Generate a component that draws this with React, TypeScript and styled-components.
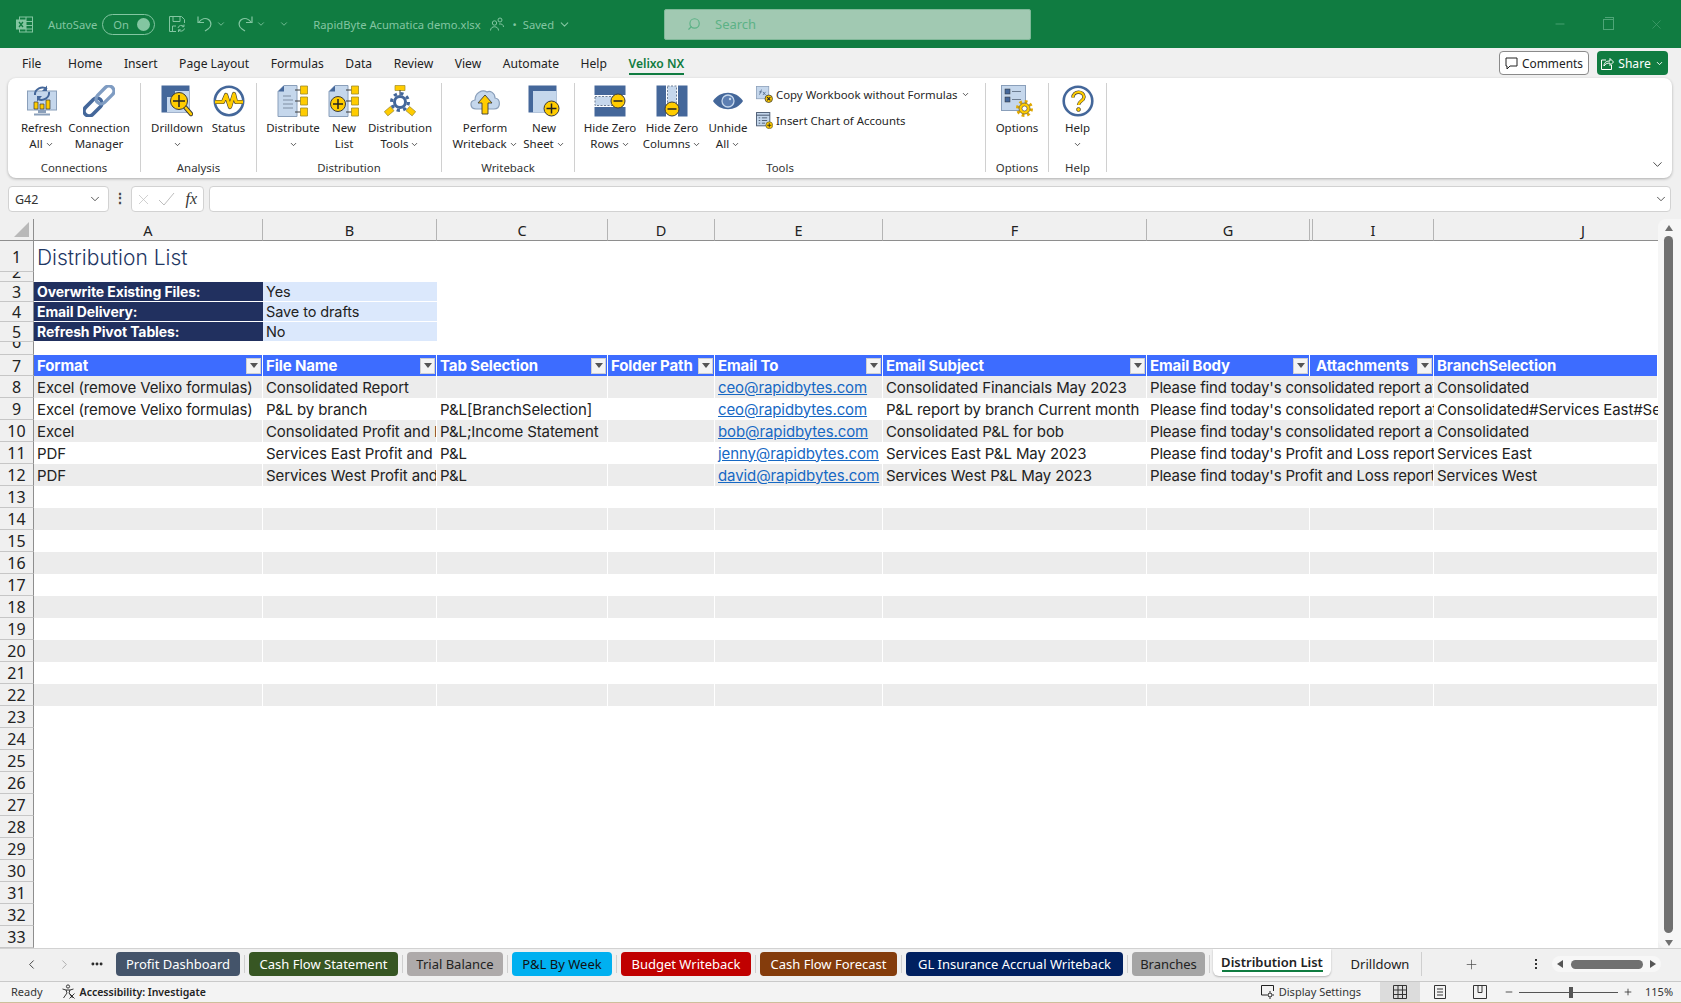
import React from 'react';
import styled, { createGlobalStyle } from 'styled-components';
import { ChevronDown, ChevronLeft, ChevronRight, Minus, MoreHorizontal, Plus, Search, X } from 'lucide-react';

const UI_FONT = '"Noto Sans", "Open Sans", sans-serif';
const SHEET_FONT = 'Inter, "Noto Sans", sans-serif';
const BLUE = '#44679a';
const PALE = '#c5d7ec';
const EDGE = '#8a9fba';
const YELLOW = '#ffcc00';
const INK = '#3a3a3a';
const COLUMNS = '34px 229px 174px 171px 107px 168px 264px 163px 3px 121px 224px';

const GlobalStyle = createGlobalStyle`
    html, body {
        margin: 0;
        padding: 0;
        background: #f0f0f0;
        font-family: ${UI_FONT};
    }
`;

/* ---------- ribbon icons ---------- */

const Ic = ({ children, size = 32 }: { children: React.ReactNode; size?: number }) => (
    <svg width={size} height={size} viewBox="0 0 32 32" fill="none">
        {children}
    </svg>
);

const YellowDisc = ({ x, y, r = 7, plus = true }: { x: number; y: number; r?: number; plus?: boolean }) => (
    <>
        <circle cx={x} cy={y} r={r} fill={YELLOW} stroke={INK} strokeWidth="1" />
        <path d={`M${x - r + 2.5} ${y}h${2 * r - 5}`} stroke="#222" strokeWidth="1.5" />
        {plus && <path d={`M${x} ${y - r + 2.5}v${2 * r - 5}`} stroke="#222" strokeWidth="1.5" />}
    </>
);

const RefreshIcon = () => (
    <Ic>
        <rect x="1.5" y="6" width="29" height="19" fill={PALE} stroke={EDGE} />
        <path d="M12 25h8v3h-8zM8 28.5h16v2H8z" fill={EDGE} />
        <path d="M8 17h4v7H8zM14 19h4v5h-4zM20 15h4v9h-4z" fill={YELLOW} stroke={INK} strokeWidth=".7" />
        <path d="M9 10a7.5 7 0 0 1 12-6M23 7a7.5 7 0 0 1-11 7" stroke={BLUE} strokeWidth="2" />
        <path d="M21 0.5v5.5h-5zM11 16.5v-5.5h5z" fill={BLUE} />
    </Ic>
);

const ChainIcon = () => (
    <Ic>
        <g transform="rotate(-45 16 16)">
            <rect x="-3" y="11" width="21" height="10" rx="5" stroke={BLUE} strokeWidth="3.6" />
            <rect x="14" y="11" width="21" height="10" rx="5" stroke="#7f9cc2" strokeWidth="3.4" />
        </g>
    </Ic>
);

const DrilldownIcon = () => (
    <Ic>
        <rect x="0.5" y="0.5" width="28" height="27" fill={BLUE} />
        <rect x="6" y="6" width="22" height="21" fill={PALE} />
        <rect x="6" y="6" width="8" height="6" fill={BLUE} />
        <path d="M24 22l6 7" stroke={INK} strokeWidth="4.4" strokeLinecap="round" />
        <path d="M24 22l6 7" stroke={YELLOW} strokeWidth="2.6" strokeLinecap="round" />
        <YellowDisc x={18} y={16} r={8.5} />
    </Ic>
);

const StatusIcon = () => (
    <Ic>
        <circle cx="16" cy="16" r="14.2" fill="#fff" stroke={BLUE} strokeWidth="2.6" />
        <path d="M2 17h8l3-7 4 12 4-13 2 8h7" stroke={INK} strokeWidth="4.2" strokeLinejoin="round" />
        <path d="M2 17h8l3-7 4 12 4-13 2 8h7" stroke={YELLOW} strokeWidth="3" strokeLinejoin="round" />
    </Ic>
);

const SideBoxes = () => (
    <>
        <path d="M18 5h6M18 16h6M18 27h6" stroke={INK} />
        <path d="M23.5 1h7v8h-7zM23.5 12h7v8h-7zM23.5 23h7v8h-7z" fill={YELLOW} stroke="#9c8a2a" strokeWidth=".8" />
    </>
);

const DocBase = () => (
    <>
        <path d="M1 6.5L7 .5h13v31H1z" fill={PALE} stroke={EDGE} />
        <path d="M1 6.5L7 .5v6z" fill={BLUE} />
    </>
);

const DistributeIcon = () => (
    <Ic>
        <DocBase />
        <path d="M6 11h8M6 15h10M6 19h10M6 23h10" stroke="#7f8ea3" />
        <SideBoxes />
    </Ic>
);

const NewListIcon = () => (
    <Ic>
        <DocBase />
        <SideBoxes />
        <YellowDisc x={10} y={19} r={7.5} />
    </Ic>
);

const DistToolsIcon = () => (
    <Ic>
        <path d="M11 .5h10v5H11z" fill={YELLOW} stroke="#9c8a2a" strokeWidth=".7" />
        <path d="M16 5v5" stroke={INK} />
        <path d="M8 23l-3 3M24 23l3 3" stroke={INK} />
        <circle cx="16" cy="17" r="8.5" stroke={BLUE} strokeWidth="3" strokeDasharray="3.3 3.37" />
        <circle cx="16" cy="17" r="5.5" fill="#fff" stroke={BLUE} strokeWidth="3" />
        <rect x="1" y="23.5" width="8" height="5.5" transform="rotate(-40 5 26)" fill={YELLOW} stroke="#9c8a2a" strokeWidth=".7" />
        <rect x="23" y="23.5" width="8" height="5.5" transform="rotate(40 27 26)" fill={YELLOW} stroke="#9c8a2a" strokeWidth=".7" />
    </Ic>
);

const CloudIcon = () => (
    <Ic>
        <path d="M7 24C1 24 0 16 6 15c0-7 7-11 12-8 3-2 8 1 8 6 6 1 6 11-1 11z" fill={PALE} stroke={EDGE} strokeWidth="1.2" />
        <path d="M16 10l7 8h-4v11h-6V18H9z" fill={YELLOW} stroke={INK} strokeWidth=".9" />
    </Ic>
);

const NewSheetIcon = () => (
    <Ic>
        <rect x="0.5" y="0.5" width="28" height="27" fill={BLUE} />
        <rect x="5" y="6" width="23.5" height="21.5" fill={PALE} />
        <YellowDisc x={23.5} y={23.5} r={7.5} />
    </Ic>
);

const HideRowsIcon = () => (
    <Ic>
        <rect x="0.5" y="0.5" width="31" height="9.5" fill={BLUE} />
        <rect x="0.5" y="22" width="31" height="9.5" fill={BLUE} />
        <rect x="1" y="11.5" width="22" height="9" fill={PALE} stroke="#6f7f95" strokeDasharray="2 1.5" />
        <YellowDisc x={24} y={16} r={7} plus={false} />
    </Ic>
);

const HideColumnsIcon = () => (
    <Ic>
        <rect x="0.5" y="0.5" width="9.5" height="31" fill={BLUE} />
        <rect x="22" y="0.5" width="9.5" height="31" fill={BLUE} />
        <rect x="11.5" y="1" width="9" height="22" fill={PALE} stroke="#6f7f95" strokeDasharray="2 1.5" />
        <YellowDisc x={16} y={24} r={7} plus={false} />
    </Ic>
);

const EyeIcon = () => (
    <Ic>
        <path d="M1 16C8 5 24 5 31 16 24 27 8 27 1 16z" fill={BLUE} />
        <circle cx="16" cy="16" r="6" fill="#5d7fb2" stroke={PALE} strokeWidth="1.3" />
        <circle cx="18" cy="14" r="1.2" fill={PALE} />
    </Ic>
);

const CopyWorkbookIcon = () => (
    <Ic size={17}>
        <rect x="1" y="1" width="23" height="23" fill={PALE} stroke={EDGE} strokeWidth="1.5" />
        <path d="M6 16c3 0 2-9 5-9M6 11h5M13 11l5 6M18 11l-5 6" stroke="#4d6689" strokeWidth="1.5" />
        <circle cx="24" cy="24" r="7" fill={YELLOW} stroke={INK} strokeWidth="1.5" />
        <path d="M21 21l6 6M27 21l-6 6" stroke="#222" strokeWidth="2" />
    </Ic>
);

const ChartAccountsIcon = () => (
    <Ic size={17}>
        <rect x="1" y="1" width="25" height="25" fill={PALE} stroke="#4f5f75" strokeWidth="1.8" />
        <path d="M1 6h25" stroke="#4f5f75" strokeWidth="2" />
        <path d="M5 11h3M11 11h10M5 16h3M11 16h10M5 21h3M11 21h6" stroke="#4f5f75" strokeWidth="1.8" />
        <circle cx="25" cy="25" r="6.5" fill={YELLOW} stroke={INK} strokeWidth="1" />
        <path d="M21 25h8M25 21v8" stroke="#222" strokeWidth="1.5" />
    </Ic>
);

const OptionsIcon = () => (
    <Ic>
        <rect x="0.5" y="0.5" width="24" height="25" fill={PALE} stroke={EDGE} />
        <rect x="4" y="4" width="5" height="5" fill={BLUE} stroke="#333" strokeWidth=".5" />
        <rect x="4" y="12" width="5" height="5" fill={BLUE} stroke="#333" strokeWidth=".5" />
        <path d="M11 6.5h9M11 14.5h9" stroke="#6d7d92" />
        <circle cx="23.5" cy="23.5" r="7" stroke="#e0a800" strokeWidth="3" strokeDasharray="2.75 2.75" />
        <circle cx="23.5" cy="23.5" r="5.5" fill={YELLOW} stroke={INK} strokeWidth=".6" />
        <circle cx="23.5" cy="23.5" r="2.5" fill="#fff" stroke={INK} strokeWidth=".6" />
    </Ic>
);

const HelpIcon = () => (
    <Ic>
        <circle cx="16" cy="16" r="14.3" fill="#fff" stroke={BLUE} strokeWidth="2.6" />
        <path d="M11 12.5c0-7 11-7 11-.5 0 4-5.5 4-5.5 8" stroke={INK} strokeWidth="3.4" />
        <path d="M11 12.5c0-7 11-7 11-.5 0 4-5.5 4-5.5 8" stroke={YELLOW} strokeWidth="2.2" />
        <circle cx="16.5" cy="24.5" r="2" fill={YELLOW} stroke={INK} strokeWidth=".7" />
    </Ic>
);

const SaveIcon = () => (
    <svg width="18" height="18" viewBox="0 0 18 18" fill="none" stroke="currentColor">
        <path d="M8 16.5H1.5v-15h12l3 3V8" />
        <path d="M5 1.5v5h7v-5M4.5 16v-5H8" />
        <path d="M10 13a3.5 3.5 0 0 1 6-1.5M16.5 13.5a3.5 3.5 0 0 1-6 1.5M16 9.5v2.2h-2.2M10.5 17v-2.2h2.2" />
    </svg>
);

const UndoIcon = ({ flip }: { flip?: boolean }) => (
    <svg width="16" height="18" viewBox="0 0 16 18" fill="none" stroke="currentColor" strokeWidth="1.2" style={flip ? { transform: 'scaleX(-1)' } : undefined}>
        <path d="M1 1.5v6h6" />
        <path d="M1.5 7.5c3-4 7-5 10-3 3.5 2.5 3 7.5-.5 9.5l-3 2" />
    </svg>
);

const ExcelLogo = () => (
    <svg width="17" height="17" viewBox="0 0 17 17" fill="none" stroke="currentColor">
        <rect x="3.5" y="1" width="13" height="15" />
        <path d="M10 1v15M10 5.5h6.5M10 9.5h6.5M10 13h6.5" />
        <rect x=".5" y="4" width="9" height="9" fill="currentColor" />
        <path d="M3 6l4 5M7 6l-4 5" stroke="#107c41" strokeWidth="1.3" />
    </svg>
);

const PersonIcon = () => (
    <svg width="14" height="14" viewBox="0 0 14 14" fill="none" stroke="currentColor">
        <circle cx="4.5" cy="6" r="2.2" />
        <path d="M.5 13.5c0-5 8-5 8 0" />
        <circle cx="10" cy="3" r="2" />
        <path d="M9 7c3-.5 4.5 1 4.5 3" />
    </svg>
);

const CommentIcon = () => (
    <svg width="13" height="13" viewBox="0 0 13 13" fill="none" stroke="#222">
        <path d="M1 1h11v8H5l-3 3V9H1z" />
    </svg>
);

const ShareIcon = () => (
    <svg width="13" height="13" viewBox="0 0 13 13" fill="none" stroke="currentColor">
        <path d="M5 3H.5v9.5h10V8" />
        <path d="M3 9c0-4 3-5 6-5V1.5l3.5 3.5L9 8.5V6c-3 0-5 1-6 3z" />
    </svg>
);

const AccessibilityIcon = () => (
    <svg width="15" height="15" viewBox="0 0 15 15" fill="none" stroke="#222" strokeWidth=".9">
        <circle cx="7" cy="2.5" r="1.6" />
        <path d="M1.5 5L5 6l1 3-3.5 5M12.5 5L9 6 8 9l3.5 5M5 6h4M8.5 9.5l5 5M13.5 9.5l-5 5" />
    </svg>
);

const DisplayIcon = () => (
    <svg width="14" height="14" viewBox="0 0 14 14" fill="none" stroke="#222">
        <path d="M5 10H.5V.5h12V6" />
        <circle cx="9" cy="10" r="2" />
        <path d="M9 6v1.5M9 12.5V14M5 10h1.5M11.5 10H13" />
    </svg>
);

const NormalViewIcon = () => (
    <svg width="14" height="14" viewBox="0 0 14 14" fill="none" stroke="#333">
        <path d="M.5.5h13v13H.5zM.5 5h13M.5 9.5h13M5 .5v13M9.5 .5v13" />
    </svg>
);

const PageViewIcon = () => (
    <svg width="14" height="14" viewBox="0 0 14 14" fill="none" stroke="#333">
        <path d="M1.5.5h11v13h-11zM4 4h6M4 7h6M4 10h6" />
    </svg>
);

const BreakViewIcon = () => (
    <svg width="14" height="14" viewBox="0 0 14 14" fill="none" stroke="#333">
        <path d="M.5.5h13v13H.5zM5 .5v7h4v-7" />
    </svg>
);

const FilterTriangle = styled.span`
    width: 0;
    height: 0;
    border-left: 4px solid transparent;
    border-right: 4px solid transparent;
    border-top: 5px solid #555;
`;

/* ---------- page ---------- */

const Page = styled.div`
    width: 1681px;
    height: 1003px;
    overflow: hidden;
    display: flex;
    flex-direction: column;
    background: #f0f0f0;
    color: #222;
`;

const TitleBar = styled.header`
    height: 48px;
    flex: none;
    display: flex;
    align-items: center;
    background: #107c41;
    color: #83c6a1;
    font-size: 11.2px;
`;

const TitleLeft = styled.div`
    width: 664px;
    flex: none;
    display: flex;
    align-items: center;
`;

const TitleSlot = styled.div<{ $left: number }>`
    margin-left: ${(p) => p.$left}px;
    display: flex;
    align-items: center;
    white-space: nowrap;
`;

const Toggle = styled.div`
    width: 53px;
    height: 21px;
    box-sizing: border-box;
    border: 1px solid #83c6a1;
    border-radius: 11px;
    display: flex;
    align-items: center;
    justify-content: space-between;
    padding: 0 4px 0 10px;
`;

const ToggleKnob = styled.span`
    width: 13px;
    height: 13px;
    border-radius: 50%;
    background: #83c6a1;
`;

const SearchBox = styled.div`
    width: 367px;
    height: 31px;
    flex: none;
    box-sizing: border-box;
    padding-left: 22px;
    border: 1px solid #7fb898;
    border-radius: 2px;
    background: #a1c9b2;
    color: #5cb286;
    display: flex;
    align-items: center;
    gap: 14px;
    font-size: 13px;
`;

const WindowButtons = styled.div`
    margin-left: auto;
    width: 111px;
    padding-right: 17px;
    display: flex;
    justify-content: space-between;
    align-items: center;
    color: #4ea577;
`;

const RestoreGlyph = styled.span`
    position: relative;
    width: 9px;
    height: 9px;
    border: 1px solid #4ea577;
    &::after {
        content: '';
        position: absolute;
        left: 1px;
        top: -3px;
        width: 8px;
        height: 8px;
        border-top: 1px solid #4ea577;
        border-right: 1px solid #4ea577;
    }
`;

const MenuRow = styled.nav`
    height: 30px;
    flex: none;
    display: flex;
    align-items: center;
    padding: 0 13px 0 22px;
    gap: 21.6px;
    font-size: 12.1px;
`;

const MenuTab = styled.span<{ $active?: boolean; $gapAfter?: number }>`
    position: relative;
    margin-right: ${(p) => p.$gapAfter ?? 0}px;
    color: ${(p) => (p.$active ? '#107c41' : '#222')};
    font-weight: ${(p) => (p.$active ? 600 : 400)};
    &::after {
        content: '';
        display: ${(p) => (p.$active ? 'block' : 'none')};
        position: absolute;
        left: 0;
        right: 0;
        bottom: -3px;
        height: 2px;
        background: #107c41;
    }
`;

const MenuActions = styled.div`
    margin-left: auto;
    display: flex;
    gap: 8px;
`;

const CommentsButton = styled.div`
    width: 90px;
    height: 24px;
    box-sizing: border-box;
    border: 1px solid #8a8a8a;
    border-radius: 4px;
    background: #fff;
    display: flex;
    align-items: center;
    justify-content: center;
    gap: 4px;
    font-size: 11.9px;
`;

const ShareButton = styled.div`
    width: 71px;
    height: 24px;
    border-radius: 4px;
    background: #107c41;
    color: #fff;
    display: flex;
    align-items: center;
    justify-content: center;
    gap: 4px;
`;

const Ribbon = styled.section`
    position: relative;
    flex: none;
    height: 100px;
    margin: 0 9px 0 8px;
    box-sizing: border-box;
    padding-top: 5px;
    display: flex;
    align-items: flex-start;
    background: #fff;
    border-radius: 8px;
    box-shadow: 0 1px 3px rgba(0, 0, 0, 0.28);
`;

const Group = styled.div<{ $w: number }>`
    width: ${(p) => p.$w}px;
    height: 89px;
    box-sizing: border-box;
    flex: none;
    display: flex;
    flex-direction: column;
    border-right: 1px solid #d0d0d0;
`;

const GroupBody = styled.div<{ $pad: number }>`
    flex: 1;
    display: flex;
    padding-left: ${(p) => p.$pad}px;
`;

const GroupLabel = styled.div`
    height: 14px;
    line-height: 20px;
    text-align: center;
    font-size: 11.4px;
    color: #333;
`;

const RibbonItem = styled.div<{ $w: number }>`
    width: ${(p) => p.$w}px;
    flex: none;
    display: flex;
    flex-direction: column;
    align-items: center;
    padding-top: 2px;
    font-size: 11.5px;
    line-height: 16px;
    color: #262626;
    white-space: nowrap;
`;

const ItemIcon = styled.div`
    height: 32px;
    margin-bottom: 3px;
`;

const ItemLine = styled.div`
    height: 16px;
    display: flex;
    align-items: center;
    gap: 2px;
`;

const SmallColumn = styled.div`
    margin-left: 3px;
    padding-top: 3px;
    display: flex;
    flex-direction: column;
    gap: 9px;
    font-size: 11.4px;
    color: #262626;
`;

const SmallItem = styled.div`
    height: 17px;
    display: flex;
    align-items: center;
    gap: 3px;
    white-space: nowrap;
`;

const CollapseRibbon = styled.span`
    position: absolute;
    right: 7px;
    bottom: 6px;
    display: flex;
    color: #333;
`;

const FormulaBar = styled.div`
    flex: none;
    height: 26px;
    margin-top: 8px;
    padding: 0 10px 0 8px;
    display: flex;
    align-items: stretch;
`;

const FieldBox = styled.div<{ $w?: number; $gap?: number; $endPad?: number }>`
    ${(p) => (p.$w ? `width: ${p.$w}px; flex: none;` : 'flex: 1;')}
    margin-left: ${(p) => p.$gap ?? 0}px;
    box-sizing: border-box;
    border: 1px solid #d2d2d2;
    border-radius: 4px;
    background: #fff;
    display: flex;
    align-items: center;
    justify-content: space-between;
    padding: 0 ${(p) => p.$endPad ?? 6}px 0 6px;
    font-size: 12.5px;
    color: #333;
`;

const BarDivider = styled.span`
    width: 22px;
    flex: none;
    text-align: center;
    line-height: 24px;
    font-weight: 700;
    font-size: 14px;
    color: #444;
`;

const Fx = styled.span`
    font-family: 'Liberation Serif', serif;
    font-style: italic;
    font-size: 16px;
    color: #333;
`;

const FxMarks = styled.div`
    margin-left: -3px;
    display: flex;
    align-items: center;
    gap: 6px;
    color: #bdbdbd;
`;

const SheetArea = styled.main`
    flex: none;
    height: 729px;
    margin-top: 7px;
    display: flex;
`;

const Sheet = styled.div`
    width: 1658px;
    flex: none;
    overflow: hidden;
    display: flex;
    flex-direction: column;
    background: #fff;
`;

const SheetRow = styled.div<{ $h: number }>`
    height: ${(p) => p.$h}px;
    flex: none;
    display: grid;
    grid-template-columns: ${COLUMNS};
`;

const ColumnHead = styled.div<{ $shift?: number }>`
    box-sizing: border-box;
    display: flex;
    align-items: center;
    justify-content: center;
    padding: 1px 0 0 ${(p) => p.$shift ?? 0}px;
    background: #f0f0f0;
    border-right: 1px solid #b4b4b4;
    border-bottom: 1px solid #8e8e8e;
    font-size: 14.5px;
    color: #222;
    &:last-child {
        border-right: 0;
    }
`;

const Corner = styled(ColumnHead)`
    position: relative;
    border-right: 1px solid #8e8e8e;
    &::after {
        content: '';
        position: absolute;
        right: 4px;
        bottom: 3px;
        border-left: 15px solid transparent;
        border-bottom: 15px solid #b9b9b9;
    }
`;

const RowNumber = styled.div<{ $clipped?: boolean }>`
    box-sizing: border-box;
    overflow: hidden;
    display: flex;
    align-items: ${(p) => (p.$clipped ? 'flex-start' : 'center')};
    justify-content: center;
    padding-top: ${(p) => (p.$clipped ? 0 : 1)}px;
    line-height: ${(p) => (p.$clipped ? 0 : '20px')};
    background: #f0f0f0;
    border-right: 1px solid #8e8e8e;
    border-bottom: 1px solid #c6c6c6;
    font-size: 16px;
    color: #222;
`;

const Cell = styled.div<{ $tone?: 'band' | 'head' | 'label' | 'value'; $span?: number }>`
    box-sizing: border-box;
    overflow: hidden;
    white-space: nowrap;
    display: flex;
    align-items: center;
    justify-content: space-between;
    padding: 0 1px 0 3px;
    font-family: ${SHEET_FONT};
    font-size: 15px;
    letter-spacing: ${(p) => (p.$span ? '-0.18px' : '-0.1px')};
    ${(p) => p.$span && `grid-column: span ${p.$span};`}
    ${(p) => p.$tone === 'band' && 'background: #ececec; border-right: 1px solid #fff;'}
    ${(p) => p.$tone === 'head' && 'background: #3d6cff; color: #fff; font-weight: 700; border-right: 1px solid #fff;'}
    ${(p) => p.$tone === 'label' && 'background: #21305f; color: #fff; font-weight: 700; font-size: 14px; border-bottom: 1px solid #fff;'}
    ${(p) => p.$tone === 'value' && 'background: #dbe8fc; font-size: 14.5px; border-bottom: 1px solid #fff;'}
`;

const SheetTitle = styled.div`
    grid-column: span 2;
    padding: 1px 0 0 3px;
    display: flex;
    align-items: center;
    font-family: ${SHEET_FONT};
    font-size: 21px;
    font-weight: 300;
    color: #1f3864;
`;

const FilterButton = styled.span`
    width: 15px;
    height: 16px;
    flex: none;
    background: #f4f4f4;
    border: 1px solid #d0d0d0;
    box-sizing: border-box;
    display: flex;
    align-items: center;
    justify-content: center;
`;

const MailLink = styled.a`
    color: #1668c4;
    text-decoration: underline;
`;

const VScroll = styled.div`
    width: 23px;
    flex: none;
    display: flex;
    flex-direction: column;
    align-items: center;
    background: #f6f6f6;
    border-radius: 8px 0 0 8px;
    padding: 6px 2px 2px 0;
    box-sizing: border-box;
`;

const ScrollArrow = styled.span<{ $up?: boolean }>`
    flex: none;
    width: 0;
    height: 0;
    border-left: 4.5px solid transparent;
    border-right: 4.5px solid transparent;
    ${(p) => (p.$up ? 'border-bottom: 6px solid #707070;' : 'border-top: 6px solid #707070;')}
`;

const VThumb = styled.div`
    flex: 1;
    width: 9px;
    margin: 5px 0 7px;
    border-radius: 5px;
    background: #707070;
`;

const TabBar = styled.div`
    flex: none;
    height: 33px;
    box-sizing: border-box;
    border-top: 1px solid #d2d2d2;
    display: flex;
    align-items: flex-start;
    font-size: 13px;
`;

const TabNav = styled.div`
    width: 116px;
    height: 30px;
    flex: none;
    box-sizing: border-box;
    padding: 0 12px 0 24px;
    display: flex;
    align-items: center;
    justify-content: space-between;
`;

const Tabs = styled.div`
    display: flex;
    gap: 9px;
    padding-top: 3px;
`;

const Tab = styled.div<{ $w: number; $bg: string; $fg?: string }>`
    position: relative;
    width: ${(p) => p.$w}px;
    height: 24px;
    display: flex;
    align-items: center;
    justify-content: center;
    border-radius: 4px;
    background: ${(p) => p.$bg};
    color: ${(p) => p.$fg ?? '#fff'};
    white-space: nowrap;
    &::after {
        content: '';
        position: absolute;
        right: -5px;
        top: 3px;
        bottom: 3px;
        width: 1px;
        background: #cfcfcf;
    }
`;

const ActiveTab = styled.div`
    position: relative;
    width: 118px;
    height: 27px;
    margin: 0 0 0 8px;
    flex: none;
    box-sizing: border-box;
    background: #fff;
    border-radius: 0 0 6px 6px;
    box-shadow: 0 1px 2px rgba(0, 0, 0, 0.25);
    text-align: center;
    line-height: 26px;
    font-weight: 600;
    white-space: nowrap;
    &::after {
        content: '';
        position: absolute;
        left: 9px;
        right: 8px;
        bottom: 4px;
        height: 2px;
        background: #107c41;
    }
`;

const PlainTab = styled.div`
    width: 91px;
    height: 24px;
    margin-top: 3px;
    flex: none;
    box-sizing: border-box;
    padding-left: 8px;
    text-align: center;
    line-height: 24px;
    border-right: 1px solid #cfcfcf;
`;

const TabTools = styled.div`
    flex: 1;
    height: 30px;
    display: flex;
    align-items: center;
    padding-right: 20px;
`;

const AddSheet = styled.span`
    margin-left: 42px;
    display: flex;
    color: #444;
`;

const TabDots = styled.span`
    margin-left: 56px;
    display: flex;
    flex-direction: column;
    gap: 2px;
    & > i {
        width: 2px;
        height: 2px;
        background: #333;
    }
`;

const HScroll = styled.div`
    margin-left: auto;
    width: 109px;
    height: 16px;
    box-sizing: border-box;
    padding: 0 5px;
    display: flex;
    align-items: center;
    justify-content: space-between;
    border-radius: 8px;
    background: #f7f7f7;
`;

const SideArrow = styled.span<{ $left?: boolean }>`
    width: 0;
    height: 0;
    border-top: 4.5px solid transparent;
    border-bottom: 4.5px solid transparent;
    ${(p) => (p.$left ? 'border-right: 6px solid #555;' : 'border-left: 6px solid #555;')}
`;

const HThumb = styled.span`
    width: 72px;
    height: 9px;
    border-radius: 5px;
    background: #707070;
`;

const StatusBar = styled.footer`
    flex: none;
    height: 22px;
    box-sizing: border-box;
    border-top: 1px solid #c9c9c9;
    border-bottom: 1px solid #cdbf9b;
    background: #f3f3f3;
    display: flex;
    align-items: stretch;
    font-size: 11px;
    line-height: 16px;
    color: #333;
`;

const StatusText = styled.span<{ $left: number; $strong?: boolean }>`
    margin-left: ${(p) => p.$left}px;
    display: flex;
    align-items: center;
    gap: 4px;
    padding-bottom: 1px;
    font-weight: ${(p) => (p.$strong ? 600 : 400)};
    font-size: ${(p) => (p.$strong ? '10.5px' : '11px')};
    color: ${(p) => (p.$strong ? '#222' : '#333')};
    white-space: nowrap;
`;

const StatusRight = styled.div`
    margin-left: auto;
    display: flex;
    align-items: stretch;
`;

const ViewButton = styled.span<{ $on?: boolean; $w: number; $gap?: number }>`
    width: ${(p) => p.$w}px;
    margin-left: ${(p) => p.$gap ?? 0}px;
    display: flex;
    align-items: center;
    justify-content: center;
    background: ${(p) => (p.$on ? '#dcdcdc' : 'transparent')};
`;

const ZoomRail = styled.div`
    position: relative;
    width: 99px;
    margin: 0 5px;
    align-self: center;
    height: 1px;
    background: #555;
`;

const ZoomKnob = styled.span`
    position: absolute;
    left: 50px;
    top: -5px;
    width: 4px;
    height: 11px;
    background: #555;
`;

const ZoomSide = styled.div`
    margin-left: 4px;
    display: flex;
    align-items: center;
`;

const ZoomValue = styled.span`
    width: 48px;
    padding-left: 12px;
    box-sizing: border-box;
    display: flex;
    align-items: center;
`;

/* ---------- data ---------- */

const menu = ['Home', 'Insert', 'Page Layout', 'Formulas', 'Data', 'Review', 'View', 'Automate', 'Help'];

type Item = { w: number; icon: React.ReactNode; lines: string[]; caret?: boolean };
type RibbonGroup = { label: string; w: number; pad: number; items: Item[]; small?: boolean };

const ribbonGroups: RibbonGroup[] = [
    {
        label: 'Connections',
        w: 133,
        pad: 10,
        items: [
            { w: 47, icon: <RefreshIcon />, lines: ['Refresh', 'All'], caret: true },
            { w: 68, icon: <ChainIcon />, lines: ['Connection', 'Manager'] },
        ],
    },
    {
        label: 'Analysis',
        w: 116,
        pad: 6,
        items: [
            { w: 60, icon: <DrilldownIcon />, lines: ['Drilldown', ''], caret: true },
            { w: 43, icon: <StatusIcon />, lines: ['Status'] },
        ],
    },
    {
        label: 'Distribution',
        w: 185,
        pad: 7,
        items: [
            { w: 58, icon: <DistributeIcon />, lines: ['Distribute', ''], caret: true },
            { w: 44, icon: <NewListIcon />, lines: ['New', 'List'] },
            { w: 68, icon: <DistToolsIcon />, lines: ['Distribution', 'Tools'], caret: true },
        ],
    },
    {
        label: 'Writeback',
        w: 133,
        pad: 8,
        items: [
            { w: 70, icon: <CloudIcon />, lines: ['Perform', 'Writeback'], caret: true },
            { w: 48, icon: <NewSheetIcon />, lines: ['New', 'Sheet'], caret: true },
        ],
    },
    {
        label: 'Tools',
        w: 411,
        pad: 4,
        small: true,
        items: [
            { w: 62, icon: <HideRowsIcon />, lines: ['Hide Zero', 'Rows'], caret: true },
            { w: 62, icon: <HideColumnsIcon />, lines: ['Hide Zero', 'Columns'], caret: true },
            { w: 50, icon: <EyeIcon />, lines: ['Unhide', 'All'], caret: true },
        ],
    },
    {
        label: 'Options',
        w: 63,
        pad: 0,
        items: [{ w: 62, icon: <OptionsIcon />, lines: ['Options'] }],
    },
    {
        label: 'Help',
        w: 58,
        pad: 0,
        items: [{ w: 57, icon: <HelpIcon />, lines: ['Help', ''], caret: true }],
    },
];

const columnLetters = ['A', 'B', 'C', 'D', 'E', 'F', 'G', '', 'I', 'J'];

const settings = [
    { row: 3, label: 'Overwrite Existing Files:', value: 'Yes' },
    { row: 4, label: 'Email Delivery:', value: 'Save to drafts' },
    { row: 5, label: 'Refresh Pivot Tables:', value: 'No' },
];

const headers = ['Format', 'File Name', 'Tab Selection', 'Folder Path', 'Email To', 'Email Subject', 'Email Body', '', 'Attachments', 'BranchSelection'];

const records = [
    ['Excel (remove Velixo formulas)', 'Consolidated Report', '', '', 'ceo@rapidbytes.com', 'Consolidated Financials May 2023', "Please find today's consolidated report attached", 'Consolidated'],
    ['Excel (remove Velixo formulas)', 'P&L by branch', 'P&L[BranchSelection]', '', 'ceo@rapidbytes.com', 'P&L report by branch Current month', "Please find today's consolidated report attached", 'Consolidated#Services East#Services West'],
    ['Excel', 'Consolidated Profit and Loss', 'P&L;Income Statement', '', 'bob@rapidbytes.com', 'Consolidated P&L for bob', "Please find today's consolidated report attached", 'Consolidated'],
    ['PDF', 'Services East Profit and Loss', 'P&L', '', 'jenny@rapidbytes.com', 'Services East P&L May 2023', "Please find today's Profit and Loss report attached", 'Services East'],
    ['PDF', 'Services West Profit and Loss', 'P&L', '', 'david@rapidbytes.com', 'Services West P&L May 2023', "Please find today's Profit and Loss report attached", 'Services West'],
];

const sheetTabs = [
    { name: 'Profit Dashboard', w: 124, bg: '#44546a' },
    { name: 'Cash Flow Statement', w: 149, bg: '#375623' },
    { name: 'Trial Balance', w: 96, bg: '#aeaaaa', fg: '#222' },
    { name: 'P&L By Week', w: 100, bg: '#00b0f0', fg: '#111' },
    { name: 'Budget Writeback', w: 130, bg: '#c00000' },
    { name: 'Cash Flow Forecast', w: 137, bg: '#843c0c' },
    { name: 'GL Insurance Accrual Writeback', w: 217, bg: '#002060' },
    { name: 'Branches', w: 73, bg: '#a5a5a5', fg: '#222' },
];

const Caret = () => <ChevronDown size={9} strokeWidth={2} />;

function RibbonGroupView({ group }: { group: RibbonGroup }) {
    return (
        <Group $w={group.w}>
            <GroupBody $pad={group.pad}>
                {group.items.map((item) => {
                    const lines = item.lines;
                    return (
                        <RibbonItem key={lines.join('-')} $w={item.w}>
                            <ItemIcon>{item.icon}</ItemIcon>
                            {lines.map((line, i) => (
                                <ItemLine key={i}>
                                    {line}
                                    {item.caret && i === lines.length - 1 && <Caret />}
                                </ItemLine>
                            ))}
                        </RibbonItem>
                    );
                })}
                {group.small && (
                    <SmallColumn>
                        <SmallItem>
                            <CopyWorkbookIcon />
                            Copy Workbook without Formulas
                            <Caret />
                        </SmallItem>
                        <SmallItem>
                            <ChartAccountsIcon />
                            Insert Chart of Accounts
                        </SmallItem>
                    </SmallColumn>
                )}
            </GroupBody>
            <GroupLabel>{group.label}</GroupLabel>
        </Group>
    );
}

function RecordRow({ row, values }: { row: number; values: string[] }) {
    const tone = row % 2 === 0 ? 'band' : undefined;
    const [format, file, tab, folder, mail, subject, body, branch] = values;
    return (
        <SheetRow $h={22}>
            <RowNumber>{row}</RowNumber>
            <Cell $tone={tone}>{format}</Cell>
            <Cell $tone={tone}>{file}</Cell>
            <Cell $tone={tone}>{tab}</Cell>
            <Cell $tone={tone}>{folder}</Cell>
            <Cell $tone={tone}>
                <MailLink>{mail}</MailLink>
            </Cell>
            <Cell $tone={tone}>{subject}</Cell>
            <Cell $tone={tone} $span={3}>
                {body}
            </Cell>
            <Cell $tone={tone}>{branch}</Cell>
        </SheetRow>
    );
}

function EmptyRow({ row }: { row: number }) {
    const tone = row <= 22 && row % 2 === 0 ? 'band' : undefined;
    return (
        <SheetRow $h={22}>
            <RowNumber>{row}</RowNumber>
            {columnLetters.map((letter, i) => (
                <Cell key={`${letter}${i}`} $tone={tone} />
            ))}
        </SheetRow>
    );
}

export default function App() {
    const emptyRows = Array.from({ length: 21 }, (_, i) => i + 13);
    return (
        <Page>
            <GlobalStyle />
            <TitleBar>
                <TitleLeft>
                    <TitleSlot $left={16}>
                        <ExcelLogo />
                    </TitleSlot>
                    <TitleSlot $left={15}>AutoSave</TitleSlot>
                    <TitleSlot $left={5}>
                        <Toggle>
                            On
                            <ToggleKnob />
                        </Toggle>
                    </TitleSlot>
                    <TitleSlot $left={13}>
                        <SaveIcon />
                    </TitleSlot>
                    <TitleSlot $left={11}>
                        <UndoIcon />
                        <ChevronDown size={10} style={{ marginLeft: 3 }} />
                    </TitleSlot>
                    <TitleSlot $left={11}>
                        <UndoIcon flip />
                        <ChevronDown size={10} style={{ marginLeft: 3 }} />
                    </TitleSlot>
                    <TitleSlot $left={13}>
                        <ChevronDown size={10} />
                    </TitleSlot>
                    <TitleSlot $left={24}>RapidByte Acumatica demo.xlsx</TitleSlot>
                    <TitleSlot $left={9}>
                        <PersonIcon />
                    </TitleSlot>
                    <TitleSlot $left={9}>•</TitleSlot>
                    <TitleSlot $left={6}>
                        Saved
                        <ChevronDown size={13} style={{ marginLeft: 4 }} />
                    </TitleSlot>
                </TitleLeft>
                <SearchBox>
                    <Search size={14} style={{ transform: 'scaleX(-1)' }} />
                    Search
                </SearchBox>
                <WindowButtons>
                    <Minus size={14} strokeWidth={1.5} />
                    <RestoreGlyph />
                    <X size={15} strokeWidth={1} />
                </WindowButtons>
            </TitleBar>

            <MenuRow>
                <MenuTab $gapAfter={5}>File</MenuTab>
                {menu.map((name) => (
                    <MenuTab key={name}>{name}</MenuTab>
                ))}
                <MenuTab $active>Velixo NX</MenuTab>
                <MenuActions>
                    <CommentsButton>
                        <CommentIcon />
                        Comments
                    </CommentsButton>
                    <ShareButton>
                        <ShareIcon />
                        Share
                        <ChevronDown size={9} strokeWidth={2.5} />
                    </ShareButton>
                </MenuActions>
            </MenuRow>

            <Ribbon>
                {ribbonGroups.map((group) => (
                    <RibbonGroupView key={group.label} group={group} />
                ))}
                <CollapseRibbon>
                    <ChevronDown size={15} strokeWidth={1.4} />
                </CollapseRibbon>
            </Ribbon>

            <FormulaBar>
                <FieldBox $w={101}>
                    G42
                    <ChevronDown size={14} strokeWidth={1.4} />
                </FieldBox>
                <BarDivider>⋮</BarDivider>
                <FieldBox $w={73}>
                    <FxMarks>
                        <X size={17} strokeWidth={1} />
                        <svg width="17" height="15" viewBox="0 0 17 15" fill="none" stroke="currentColor">
                            <path d="M1 8l5 5L16 1" />
                        </svg>
                    </FxMarks>
                    <Fx>fx</Fx>
                </FieldBox>
                <FieldBox $gap={5} $endPad={2}>
                    <span />
                    <ChevronDown size={14} strokeWidth={1.4} />
                </FieldBox>
            </FormulaBar>

            <SheetArea>
                <Sheet>
                    <SheetRow $h={22}>
                        <Corner />
                        {columnLetters.map((letter, i) => (
                            <ColumnHead key={`${letter}${i}`} $shift={letter === 'J' ? 74 : 0}>
                                {letter}
                            </ColumnHead>
                        ))}
                    </SheetRow>
                    <SheetRow $h={31}>
                        <RowNumber>1</RowNumber>
                        <SheetTitle>Distribution List</SheetTitle>
                    </SheetRow>
                    <SheetRow $h={10}>
                        <RowNumber $clipped>2</RowNumber>
                    </SheetRow>
                    {settings.map((s) => (
                        <SheetRow key={s.row} $h={20}>
                            <RowNumber>{s.row}</RowNumber>
                            <Cell $tone="label">{s.label}</Cell>
                            <Cell $tone="value">{s.value}</Cell>
                        </SheetRow>
                    ))}
                    <SheetRow $h={13}>
                        <RowNumber $clipped>6</RowNumber>
                    </SheetRow>
                    <SheetRow $h={21}>
                        <RowNumber>7</RowNumber>
                        {headers.map((name, i) => (
                            <Cell key={`${name}${i}`} $tone="head">
                                {name}
                                {name && i < 9 && (
                                    <FilterButton>
                                        <FilterTriangle />
                                    </FilterButton>
                                )}
                            </Cell>
                        ))}
                    </SheetRow>
                    {records.map((values, i) => (
                        <RecordRow key={i} row={i + 8} values={values} />
                    ))}
                    {emptyRows.map((row) => (
                        <EmptyRow key={row} row={row} />
                    ))}
                </Sheet>
                <VScroll>
                    <ScrollArrow $up />
                    <VThumb />
                    <ScrollArrow />
                </VScroll>
            </SheetArea>

            <TabBar>
                <TabNav>
                    <ChevronLeft size={15} strokeWidth={1.3} />
                    <ChevronRight size={15} strokeWidth={1.3} color="#a0a0a0" />
                    <MoreHorizontal size={14} strokeWidth={3} />
                </TabNav>
                <Tabs>
                    {sheetTabs.map((tab) => (
                        <Tab key={tab.name} $w={tab.w} $bg={tab.bg} $fg={tab.fg}>
                            {tab.name}
                        </Tab>
                    ))}
                </Tabs>
                <ActiveTab>Distribution List</ActiveTab>
                <PlainTab>Drilldown</PlainTab>
                <TabTools>
                    <AddSheet>
                        <Plus size={15} strokeWidth={1.1} />
                    </AddSheet>
                    <TabDots>
                        <i />
                        <i />
                        <i />
                    </TabDots>
                    <HScroll>
                        <SideArrow $left />
                        <HThumb />
                        <SideArrow />
                    </HScroll>
                </TabTools>
            </TabBar>

            <StatusBar>
                <StatusText $left={11}>Ready</StatusText>
                <StatusText $left={18} $strong>
                    <AccessibilityIcon />
                    Accessibility: Investigate
                </StatusText>
                <StatusRight>
                    <StatusText $left={0}>
                        <DisplayIcon />
                        Display Settings
                    </StatusText>
                    <ViewButton $on $w={40} $gap={19}>
                        <NormalViewIcon />
                    </ViewButton>
                    <ViewButton $w={40}>
                        <PageViewIcon />
                    </ViewButton>
                    <ViewButton $w={40}>
                        <BreakViewIcon />
                    </ViewButton>
                    <ZoomSide>
                        <Minus size={10} />
                        <ZoomRail>
                            <ZoomKnob />
                        </ZoomRail>
                        <Plus size={10} />
                    </ZoomSide>
                    <ZoomValue>115%</ZoomValue>
                </StatusRight>
            </StatusBar>
        </Page>
    );
}
